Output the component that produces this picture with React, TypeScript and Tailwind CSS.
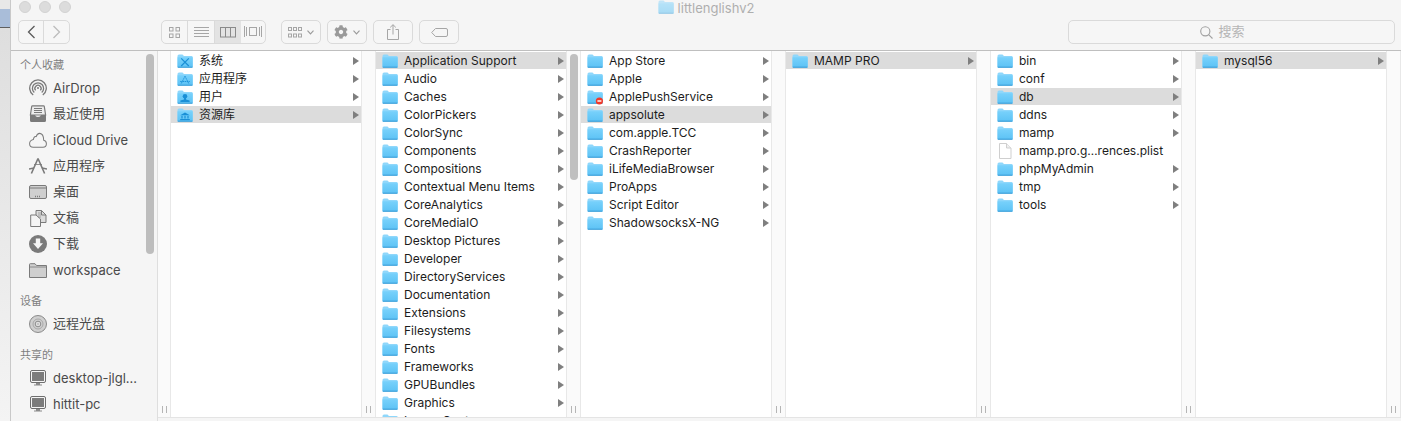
import React from "react";
import { FaCog } from "react-icons/fa";

const font = "font-['Inter','Noto_Sans_CJK_SC',sans-serif]";

type Glyph = "x" | "a" | "user" | "bank" | "block" | undefined;

function Folder({ glyph }: { glyph?: Glyph }) {
  const c = "#1a8fd6";
  return (
    <svg width="16" height="14" viewBox="0 0 16 14" className="shrink-0 overflow-visible">
      <defs>
        <linearGradient id="fg" x1="0" y1="0" x2="0" y2="1">
          <stop offset="0" stopColor="#78d1fb" />
          <stop offset="1" stopColor="#5cc2f5" />
        </linearGradient>
      </defs>
      <path d="M0.5 2 Q0.5 0.5 2 0.5 H5.5 L7 2 H14.5 Q15.7 2 15.7 3.2 V12.4 Q15.7 13.6 14.5 13.6 H1.7 Q0.5 13.6 0.5 12.4 Z" fill="#8fd7fb" />
      <path d="M0.5 3.2 H15.7 V12.4 Q15.7 13.6 14.5 13.6 H1.7 Q0.5 13.6 0.5 12.4 Z" fill="url(#fg)" />
      <path d="M0.8 13.2 H15.4" stroke="#3a9bd6" strokeWidth="1" />
      {glyph === "x" && <path d="M4.2 4.4 L11.8 12 M11.8 4.4 L4.2 12" stroke={c} strokeWidth="1.2" />}
      {glyph === "a" && <path d="M8 4.2 L4 12 M8 4.2 L12 12 M3.2 9.5 H12.8" stroke={c} strokeWidth="0.9" strokeDasharray="1.6 0.6" fill="none" />}
      {glyph === "user" && (
        <g fill={c}>
          <circle cx="8" cy="6.2" r="2.3" />
          <path d="M7 8 H9 V9.4 L12.6 10.6 V12 H3.4 V10.6 L7 9.4 Z" />
        </g>
      )}
      {glyph === "bank" && (
        <g fill={c}>
          <path d="M8 4.4 L12.8 7.2 H3.2 Z" />
          <path d="M4.4 7.8 H5.6 V10.6 H4.4 Z M7.4 7.8 H8.6 V10.6 H7.4 Z M10.4 7.8 H11.6 V10.6 H10.4 Z" />
          <path d="M3.2 11 H12.8 V12.2 H3.2 Z" />
        </g>
      )}
      {glyph === "block" && (
        <g>
          <circle cx="12.4" cy="11" r="3.6" fill="#f0392b" />
          <rect x="10.4" y="10.3" width="4" height="1.4" fill="#fff" />
        </g>
      )}
    </svg>
  );
}

function FileIcon() {
  return (
    <svg width="16" height="16" viewBox="0 0 16 16" className="shrink-0">
      <path d="M2.5 0.5 H9.5 L14 5 V15.5 H2.5 Z" fill="#fff" stroke="#cfcfcf" />
      <path d="M9.5 0.5 V5 H14" fill="#f0f0f0" stroke="#cfcfcf" />
    </svg>
  );
}

function Arrow() {
  return (
    <svg width="6" height="8" viewBox="0 0 6 8" className="shrink-0">
      <path d="M0 0 L6 4 L0 8 Z" fill="#7f7f7f" />
    </svg>
  );
}

type RowData = { t: string; g?: Glyph; sel?: boolean; file?: boolean };

function Row({ t, g, sel, file }: RowData) {
  return (
    <div className={`flex h-[17px] mb-px items-center pl-[6px] pr-[2px] ${sel ? "bg-[#dcdcdc]" : ""}`}>
      {file ? <FileIcon /> : <Folder glyph={g} />}
      <span className="ml-[6px] flex-1 text-[12px] leading-[17px] text-[#1c1c1c] whitespace-nowrap">{t}</span>
      {!file && <Arrow />}
    </div>
  );
}

function Handle() {
  return (
    <div className="flex gap-[3px] justify-center pb-[4px]">
      <div className="w-px h-[7px] bg-[#b5b5b5]" />
      <div className="w-px h-[7px] bg-[#b5b5b5]" />
    </div>
  );
}

function Column({ rows, bar }: { rows: RowData[]; bar?: boolean }) {
  return (
    <div className="flex w-[205px] shrink-0 h-full">
      <div className="w-[190px] bg-white pt-px overflow-hidden h-full">
        {rows.map((r) => (
          <Row key={r.t} {...r} />
        ))}
      </div>
      <div className="relative w-[15px] bg-[#fafafa] border-x border-[#e8e8e8] flex flex-col justify-end">
        {bar && <div className="absolute left-[3px] top-[3px] w-[8px] h-[126px] rounded-full bg-[#c0c0c0]" />}
        <Handle />
      </div>
    </div>
  );
}

const s = "#7a7a7a";
const icons: Record<string, React.ReactNode> = {
  airdrop: (
    <svg width="18" height="18" viewBox="0 0 18 18" fill="none" stroke={s} strokeWidth="1.3">
      <path d="M4.2 16 A8.3 8.3 0 1 1 13.8 16" />
      <path d="M5.3 13.6 A5.6 5.6 0 1 1 12.7 13.6" />
      <path d="M6.6 11.4 A3.1 3.1 0 1 1 11.4 11.4" />
      <circle cx="9" cy="9" r="1" fill={s} stroke="none" />
    </svg>
  ),
  recent: (
    <svg width="18" height="18" viewBox="0 0 18 18" fill="none" stroke={s}>
      <path d="M3.5 0.8 H14.5 Q15.2 0.8 15.3 1.5 L16.6 10 H1.4 L2.7 1.5 Q2.8 0.8 3.5 0.8 Z" fill="#ececec" strokeWidth="1.2" />
      <path d="M5 3.5 H13 M5 5.5 H13 M5 7.5 H13" strokeWidth="1" />
      <path d="M1 10 H6 Q6.5 12 9 12 Q11.5 12 12 10 H17 V15.5 Q17 17 15.5 17 H2.5 Q1 17 1 15.5 Z" fill={s} stroke="none" />
    </svg>
  ),
  cloud: (
    <svg width="18" height="16" viewBox="0 0 18 14" preserveAspectRatio="none" fill="none" stroke={s} strokeWidth="1">
      <path d="M4.2 13.3 H14 Q17.4 13.3 17.4 10.3 Q17.4 7.6 14.7 7.2 Q14.6 1.6 10.8 1.2 Q8.2 1.1 7.2 4 Q5 3.4 4.3 6.6 Q0.6 7.4 0.6 10.3 Q0.6 13.3 4.2 13.3 Z" />
    </svg>
  ),
  app: (
    <svg width="18" height="16" viewBox="0 0 18 16" fill="none" stroke={s} strokeWidth="1.6">
      <path d="M9 0.5 L2.4 15.5 M9 0.5 L15.6 15.5" />
      <path d="M0 11 L5 10 M13 10 L18 11" strokeWidth="1.3" />
      <path d="M5 6.5 H13" strokeWidth="0.8" />
    </svg>
  ),
  desk: (
    <svg width="18" height="14" viewBox="0 0 18 14" fill="#cfcfcf" stroke={s}>
      <rect x="0.5" y="0.5" width="17" height="13" rx="1.5" />
      <path d="M1 3 H17" strokeWidth="1" />
      <path d="M6 11.5 H12" stroke="#7a7a7a" strokeWidth="1.5" strokeDasharray="1 1" />
    </svg>
  ),
  docs: (
    <svg width="17" height="17" viewBox="0 0 17 17" fill="#f4f4f4" stroke={s}>
      <path d="M6 0.5 H11.5 L16 5 V12.5 H6 Z" fill="#dcdcdc" />
      <path d="M0.7 5 H6 L10.5 9 V16.5 H0.7 Z" />
      <path d="M11.5 0.5 V5 H16" fill="none" />
      <path d="M8 3 H11 M8 5 H11 M8 7 H11" strokeWidth="0.6" />
    </svg>
  ),
  down: (
    <svg width="18" height="18" viewBox="0 0 18 18">
      <circle cx="9" cy="9" r="9" fill={s} />
      <path d="M6.8 3.6 H11.2 V8.3 H14 L9 14 L4 8.3 H6.8 Z" fill="#f5f5f5" />
    </svg>
  ),
  folder: (
    <svg width="18" height="15" viewBox="0 0 18 15" fill="#cfcfcf" stroke={s}>
      <path d="M0.5 14.5 V1.5 Q0.5 0.7 1.3 0.7 H6 L7.5 2.5 H17.5 V14.5 Z" />
      <path d="M0.5 4 H17.5" strokeWidth="0.8" />
    </svg>
  ),
  disc: (
    <svg width="18" height="18" viewBox="0 0 18 18">
      <circle cx="9" cy="9" r="8.5" fill="#cfcfcf" stroke="#8a8a8a" />
      <circle cx="9" cy="9" r="5" fill="none" stroke="#a8a8a8" />
      <circle cx="9" cy="9" r="2.8" fill="#eaeaea" stroke="#8a8a8a" />
      <circle cx="9" cy="9" r="1" fill="#f5f5f5" stroke="#8a8a8a" strokeWidth="0.5" />
    </svg>
  ),
  pc: (
    <svg width="16" height="16" viewBox="0 0 16 16">
      <rect x="0.5" y="0.5" width="15" height="12" rx="1.5" fill="#f5f5f5" stroke="#6e6e6e" />
      <rect x="2" y="2" width="12" height="9" fill="#7c7c7c" />
      <path d="M6 13 H10 V14.5 H12 V15.5 H4 V14.5 H6 Z" fill="#8a8a8a" />
    </svg>
  ),
};

function SideItem({ icon, t, latin }: { icon: string; t: string; latin?: boolean }) {
  return (
    <div className="flex h-[26px] items-center">
      <div className="w-[18px] ml-[18px] flex justify-center shrink-0">{icons[icon]}</div>
      <span className={`ml-[6px] ${latin ? "pt-[2px]" : ""} text-[13px] text-[#4a4a4a] whitespace-nowrap`}>{t}</span>
    </div>
  );
}

function SideHead({ t, top }: { t: string; top: string }) {
  return <div className={`${top} mb-[2px] ml-[9px] h-[16px] leading-[16px] text-[11px] text-[#7f7f7f]`}>{t}</div>;
}

function Btn({ w, children, className = "" }: { w: string; children?: React.ReactNode; className?: string }) {
  return (
    <div className={`${w} h-[24px] flex items-center justify-center gap-[5px] rounded-[5px] border border-[#dadada] bg-[#f6f6f6] ${className}`}>
      {children}
    </div>
  );
}

const Chev = () => (
  <svg width="7" height="5" viewBox="0 0 7 5" fill="none" stroke="#9a9a9a" strokeWidth="1.1">
    <path d="M0.5 0.7 L3.5 3.9 L6.5 0.7" />
  </svg>
);

function Header() {
  const g = "#a6a6a6";
  return (
    <div className="h-[51px] shrink-0 bg-[#f5f5f5] border-b border-[#bfbfbf]">
      <div className="grid grid-cols-[1fr_auto_1fr] h-[20px]">
        <div className="flex gap-[8px] pl-[8px] pt-px">
          <div className="w-[12px] h-[12px] rounded-full bg-[#dcdcdc] border border-[#d2d2d2]" />
          <div className="w-[12px] h-[12px] rounded-full bg-[#dcdcdc] border border-[#d2d2d2]" />
          <div className="w-[12px] h-[12px] rounded-full bg-[#dcdcdc] border border-[#d2d2d2]" />
        </div>
        <div className="flex items-start opacity-50">
          <Folder />
          <span className="ml-[4px] mt-px text-[13px] leading-[15px] text-[#6a6a6a]">littlenglishv2</span>
        </div>
        <div />
      </div>
      <div className="flex pl-[7px] pr-[6px]">
        <div className="flex w-[52px] h-[24px] rounded-[5px] border border-[#dadada] bg-[#f6f6f6]">
          <div className="w-[25px] flex items-center justify-center border-r border-[#dadada]">
            <svg width="9" height="14" viewBox="0 0 9 14" fill="none" stroke="#5a5a5a" strokeWidth="1.3">
              <path d="M7.5 1 L1.5 7 L7.5 13" />
            </svg>
          </div>
          <div className="flex-1 flex items-center justify-center">
            <svg width="9" height="14" viewBox="0 0 9 14" fill="none" stroke="#bcbcbc" strokeWidth="1.3">
              <path d="M1.5 1 L7.5 7 L1.5 13" />
            </svg>
          </div>
        </div>
        <div className="ml-[91px] flex w-[105px] h-[24px] rounded-[5px] border border-[#dadada] bg-[#f6f6f6] overflow-hidden">
          <div className="w-[26px] flex items-center justify-center border-r border-[#dadada]">
            <svg width="11" height="11" viewBox="0 0 11 11" fill="none" stroke={g}>
              <rect x="0.5" y="0.5" width="3.5" height="3.5" />
              <rect x="7" y="0.5" width="3.5" height="3.5" />
              <rect x="0.5" y="7" width="3.5" height="3.5" />
              <rect x="7" y="7" width="3.5" height="3.5" />
            </svg>
          </div>
          <div className="w-[27px] flex items-center justify-center border-r border-[#dadada]">
            <svg width="15" height="11" viewBox="0 0 15 11" stroke={g}>
              <path d="M0 0.5 H15 M0 3.5 H15 M0 6.5 H15 M0 9.5 H15" />
            </svg>
          </div>
          <div className="w-[26px] flex items-center justify-center bg-[#e3e3e3]">
            <svg width="16" height="11" viewBox="0 0 16 11" fill="none" stroke="#8a8a8a">
              <rect x="0.5" y="0.5" width="15" height="9.5" />
              <path d="M5.5 0.5 V10 M10.5 0.5 V10" />
            </svg>
          </div>
          <div className="flex-1 flex items-center justify-center">
            <svg width="18" height="12" viewBox="0 0 18 12" fill="none" stroke={g}>
              <rect x="5.5" y="1.5" width="7" height="8" />
              <path d="M0.5 0 V11 M2.5 1 V10 M15.5 1 V10 M17.5 0 V11" />
            </svg>
          </div>
        </div>
        <Btn w="w-[40px]" className="ml-[15px]">
          <svg width="14" height="11" viewBox="0 0 14 11" fill="none" stroke={g}>
            <rect x="0.5" y="0.5" width="3" height="3" />
            <rect x="5.5" y="0.5" width="3" height="3" />
            <rect x="10.5" y="0.5" width="3" height="3" />
            <rect x="0.5" y="7" width="3" height="3" />
            <rect x="5.5" y="7" width="3" height="3" />
            <rect x="10.5" y="7" width="3" height="3" />
          </svg>
          <Chev />
        </Btn>
        <Btn w="w-[40px]" className="ml-[6px]">
          <FaCog size={14} color="#9a9a9a" />
          <Chev />
        </Btn>
        <Btn w="w-[40px]" className="ml-[6px]">
          <svg width="12" height="16" viewBox="0 0 12 16" fill="none" stroke={g}>
            <path d="M3.5 5.5 H0.5 V15.5 H11.5 V5.5 H8.5" />
            <path d="M6 10.5 V0.8 M3.2 3.4 L6 0.7 L8.8 3.4" />
          </svg>
        </Btn>
        <Btn w="w-[40px]" className="ml-[6px]">
          <svg width="17" height="9" viewBox="0 0 17 9" fill="none" stroke={g}>
            <path d="M4.5 0.5 H15 Q16.5 0.5 16.5 2 V7 Q16.5 8.5 15 8.5 H4.5 L0.7 4.5 Z" />
          </svg>
        </Btn>
        <div className="ml-auto w-[327px] h-[24px] pr-[18px] rounded-[5px] border border-[#dadada] bg-[#f6f6f6] flex items-center justify-center">
          <svg width="13" height="13" viewBox="0 0 13 13" fill="none" stroke="#a0a0a0" strokeWidth="1.1">
            <circle cx="5.3" cy="5.3" r="4.6" />
            <path d="M8.6 8.6 L12.5 12.5" />
          </svg>
          <span className="ml-[5px] text-[13px] text-[#b5b5b5]">搜索</span>
        </div>
      </div>
    </div>
  );
}

const col1: RowData[] = [
  { t: "系统", g: "x" },
  { t: "应用程序", g: "a" },
  { t: "用户", g: "user" },
  { t: "资源库", g: "bank", sel: true },
];
const col2: RowData[] = [
  { t: "Application Support", sel: true },
  ..."Audio|Caches|ColorPickers|ColorSync|Components|Compositions|Contextual Menu Items|CoreAnalytics|CoreMediaIO|Desktop Pictures|Developer|DirectoryServices|Documentation|Extensions|Filesystems|Fonts|Frameworks|GPUBundles|Graphics|Image Capture"
    .split("|")
    .map((t) => ({ t })),
];
const col3: RowData[] = [
  { t: "App Store" },
  { t: "Apple" },
  { t: "ApplePushService", g: "block" },
  { t: "appsolute", sel: true },
  { t: "com.apple.TCC" },
  { t: "CrashReporter" },
  { t: "iLifeMediaBrowser" },
  { t: "ProApps" },
  { t: "Script Editor" },
  { t: "ShadowsocksX-NG" },
];
const col4: RowData[] = [{ t: "MAMP PRO", sel: true }];
const col5: RowData[] = [
  { t: "bin" },
  { t: "conf" },
  { t: "db", sel: true },
  { t: "ddns" },
  { t: "mamp" },
  { t: "mamp.pro.g…rences.plist", file: true },
  { t: "phpMyAdmin" },
  { t: "tmp" },
  { t: "tools" },
];
const col6: RowData[] = [{ t: "mysql56", sel: true }];

export default function App() {
  return (
    <div className={`flex w-[1401px] h-[421px] overflow-hidden bg-white ${font}`}>
      <div className="w-[11px] shrink-0 flex flex-col border-r border-[#c9c9c9]">
        <div className="h-[9px] bg-[#e8e8e8]" />
        <div className="h-[19px] bg-[#a9bdd9] border-b border-[#5f5f5f]" />
        <div className="flex-1 bg-gradient-to-b from-[#dedede] to-[#f4f4f4]" />
      </div>
      <div className="flex-1 min-w-0 flex flex-col bg-[#f5f5f5]">
        <Header />
        <div className="flex flex-1 min-h-0">
          <div className="relative w-[147px] shrink-0 border-r border-[#dedede] bg-[#f5f5f5] pt-[6px]">
            <div className="absolute left-[135px] top-[3px] w-[8px] h-[200px] rounded-full bg-[#bdbdbd]" />
            <SideHead t="个人收藏" top="" />
            <SideItem icon="airdrop" t="AirDrop" latin />
            <SideItem icon="recent" t="最近使用" />
            <SideItem icon="cloud" t="iCloud Drive" latin />
            <SideItem icon="app" t="应用程序" />
            <SideItem icon="desk" t="桌面" />
            <SideItem icon="docs" t="文稿" />
            <SideItem icon="down" t="下载" />
            <SideItem icon="folder" t="workspace" latin />
            <SideHead t="设备" top="mt-[10px]" />
            <SideItem icon="disc" t="远程光盘" />
            <SideHead t="共享的" top="mt-[10px]" />
            <SideItem icon="pc" t="desktop-jlgl..." latin />
            <SideItem icon="pc" t="hittit-pc" latin />
          </div>
          <div className="flex-1 min-w-0 h-[367px] flex border-b border-[#e4e4e4] overflow-hidden">
            <div className="w-[13px] shrink-0 bg-[#fafafa] border-r border-[#e8e8e8] flex flex-col justify-end">
              <Handle />
            </div>
            <Column rows={col1} />
            <Column rows={col2} bar />
            <Column rows={col3} />
            <Column rows={col4} />
            <Column rows={col5} />
            <Column rows={col6} />
          </div>
        </div>
      </div>
    </div>
  );
}
